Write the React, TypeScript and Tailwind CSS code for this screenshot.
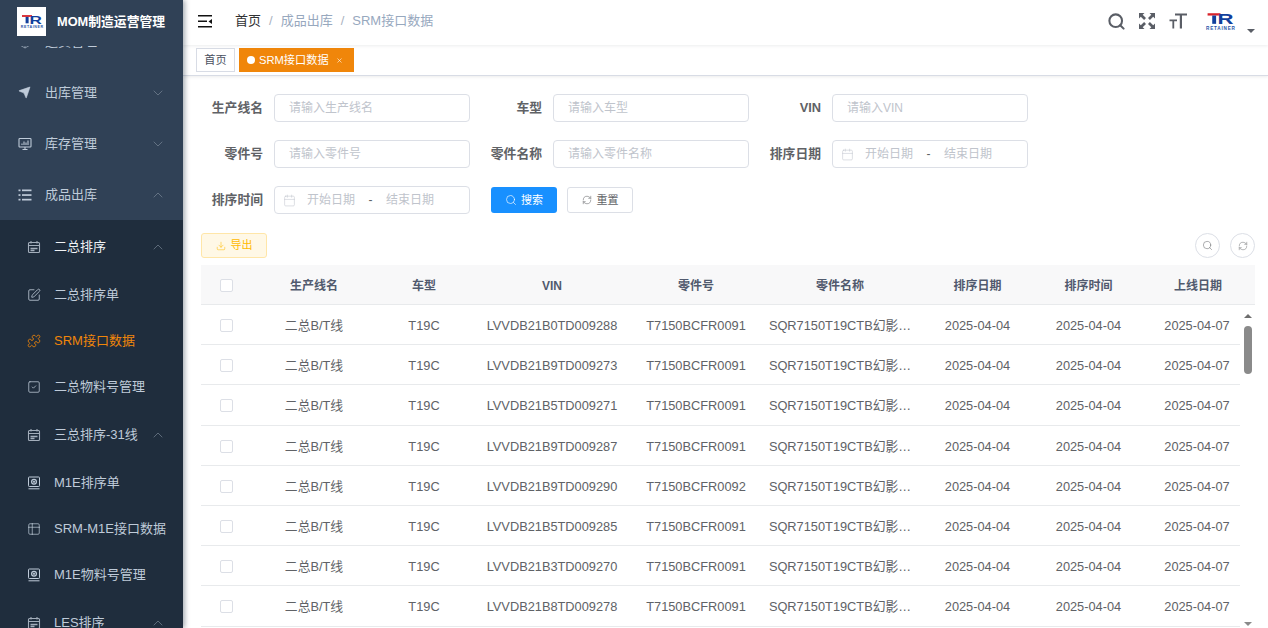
import React from "react";
import { ChevronDown, ChevronUp, Search, RefreshCw, Download, X, Calendar, SquarePen, Puzzle, SquareCheck, Table2, Send, Package } from "lucide-react";

function Logo({ w, h }: { w: number; h: number }) {
  return (
    <svg width={w} height={h} viewBox="0 0 60 36">
      <rect x="5" y="2" width="25" height="4.500" fill="#d8232a" />
      <rect x="14" y="6.500" width="7.500" height="16" fill="#123f9c" />
      <text x="24" y="23" fontFamily="Liberation Sans" fontWeight="700" fontSize="29" textLength="31" lengthAdjust="spacingAndGlyphs" fill="#123f9c">R</text>
      <text x="2" y="34" fontFamily="Liberation Sans" fontWeight="700" fontSize="9" textLength="56" lengthAdjust="spacing" fill="#2b55a8">RETAINER</text>
    </svg>
  );
}

function CalKey() {
  return (
    <svg viewBox="0 0 14 14" width="14" height="14" fill="none" stroke="currentColor" strokeWidth="1.100">
      <rect x="1.500" y="2.500" width="11" height="10" rx="1" />
      <path d="M4 1v2.500M10 1v2.500M1.500 5.500h11" />
      <path d="M3.500 8.500h7M3.500 10.500h4" strokeWidth="1.300" />
    </svg>
  );
}

function MonGear() {
  return (
    <svg viewBox="0 0 14 14" width="14" height="14" fill="none" stroke="currentColor" strokeWidth="1">
      <rect x="1.500" y="1" width="11" height="9.500" rx="0.800" />
      <circle cx="7" cy="5.700" r="2.400" strokeWidth="1.200" />
      <circle cx="7" cy="5.700" r="0.700" fill="currentColor" />
      <path d="M1.500 12.800h11" />
    </svg>
  );
}

function MonChart() {
  return (
    <svg viewBox="0 0 14 14" width="14" height="14" fill="none" stroke="currentColor" strokeWidth="1.100">
      <rect x="1" y="1.500" width="12" height="8.500" rx="0.800" />
      <path d="M4 8V6.500M6 8V4.500M8 8V5.500M10 8V3.500" />
      <path d="M7 10v2M4.500 12.500h5" />
    </svg>
  );
}

function ListIcon() {
  return (
    <svg viewBox="0 0 14 14" width="14" height="14" fill="currentColor">
      <rect x="0.500" y="1.500" width="2" height="1.700" />
      <rect x="0.500" y="6.200" width="2" height="1.700" />
      <rect x="0.500" y="10.800" width="2" height="1.700" />
      <rect x="4" y="1.500" width="9.500" height="1.700" />
      <rect x="4" y="6.200" width="9.500" height="1.700" />
      <rect x="4" y="10.800" width="9.500" height="1.700" />
    </svg>
  );
}

function TopItem({ icon, label, open }: { icon: React.ReactNode; label: string; open?: boolean }) {
  return (
    <div className="h-[51px] shrink-0 flex items-center pl-[18px] pr-[17px] text-[#bfcbd9] text-[13px]">
      <span className="w-[27px] shrink-0 flex items-center">{icon}</span>
      <span className="flex-1">{label}</span>
      {open ? <ChevronUp size={16} strokeWidth={0.9} className="text-[#8793a3]" /> : <ChevronDown size={16} strokeWidth={0.9} className="text-[#8793a3]" />}
    </div>
  );
}

function SubHead({ label, light }: { label: string; light?: boolean }) {
  return (
    <div className={`h-[50px] shrink-0 flex items-center pl-[27px] pr-[17px] text-[13px] ${light ? "text-[#f0f2f5]" : "text-[#bfcbd9]"}`}>
      <span className="w-[27px] shrink-0 flex items-center text-[#a3aebb]"><CalKey /></span>
      <span className="flex-1">{label}</span>
      <ChevronUp size={16} strokeWidth={0.9} className="text-[#8793a3]" />
    </div>
  );
}

function Leaf({ icon, label, active }: { icon: React.ReactNode; label: string; active?: boolean }) {
  return (
    <div className={`h-[46px] shrink-0 flex items-center pl-[27px] text-[13px] ${active ? "text-[#f0860a]" : "text-[#bfcbd9]"}`}>
      <span className="w-[27px] shrink-0 flex items-center">{icon}</span>
      <span className="whitespace-nowrap">{label}</span>
    </div>
  );
}

function Sidebar() {
  return (
    <aside className="w-[183px] shrink-0 h-full bg-[#304156] flex flex-col relative z-20 shadow-[2px_0_5px_rgba(0,21,41,0.35)]">
      <div className="h-[46px] shrink-0 flex items-center pl-[17px] pb-[3px]">
        <div className="w-[29px] h-[29px] bg-white flex items-center justify-center">
          <Logo w={24} h={15} />
        </div>
        <span className="ml-[11px] text-white font-bold text-[12.800px] whitespace-nowrap">MOM制造运营管理</span>
      </div>
      <div className="flex-1 overflow-hidden">
        <div className="-mt-[30px] flex flex-col">
          <TopItem icon={<Package size={14} strokeWidth={1} />} label="运货管理" />
          <TopItem icon={<Send size={13} fill="currentColor" strokeWidth={1} />} label="出库管理" />
          <TopItem icon={<MonChart />} label="库存管理" />
          <TopItem icon={<ListIcon />} label="成品出库" open />
          <div className="bg-[#1f2d3d] flex flex-col pt-[2px]">
            <SubHead label="二总排序" light />
            <Leaf icon={<SquarePen size={14} strokeWidth={1.4} />} label="二总排序单" />
            <Leaf icon={<Puzzle size={14} strokeWidth={1.4} />} label="SRM接口数据" active />
            <Leaf icon={<SquareCheck size={14} strokeWidth={1.3} />} label="二总物料号管理" />
            <SubHead label="三总排序-31线" />
            <Leaf icon={<MonGear />} label="M1E排序单" />
            <Leaf icon={<Table2 size={14} strokeWidth={1.2} />} label="SRM-M1E接口数据" />
            <Leaf icon={<MonGear />} label="M1E物料号管理" />
            <SubHead label="LES排序" />
          </div>
        </div>
      </div>
    </aside>
  );
}

function TopBar() {
  return (
    <header className="h-[45px] shrink-0 flex items-center pb-[3px] bg-white shadow-[0_1px_3px_rgba(0,21,41,0.08)] relative z-10">
      <svg viewBox="0 0 14 13" width="14" height="13" className="ml-[15px]" fill="#111">
        <rect x="0" y="0" width="14" height="1.500" />
        <rect x="0" y="5.500" width="9" height="1.500" />
        <rect x="0" y="11" width="14" height="1.500" />
        <path d="M14 4v5l-3.500-2.500z" />
      </svg>
      <nav className="ml-[23px] flex items-center text-[13px] whitespace-nowrap">
        <span className="text-[#303133]">首页</span>
        <span className="mx-[8px] text-[#a9b2c0]">/</span>
        <span className="text-[#97a8be]">成品出库</span>
        <span className="mx-[8px] text-[#a9b2c0]">/</span>
        <span className="text-[#97a8be]">SRM接口数据</span>
      </nav>
      <div className="ml-auto flex items-center text-[#5a5e66]">
        <Search size={19} strokeWidth={2.6} />
        <svg viewBox="0 0 18 18" width="18" height="18" fill="currentColor" className="ml-[12px]">
          <path d="M1 1h5.500L4.700 2.800 8 6.100 6.100 8 2.800 4.700 1 6.500zM17 1v5.500l-1.800-1.800L11.900 8 10 6.100l3.300-3.300L11.500 1zM1 17v-5.500l1.800 1.800L6.100 10 8 11.900l-3.300 3.300L6.500 17zM17 17h-5.500l1.800-1.800L10 11.900 11.900 10l3.300 3.300 1.800-1.800z" />
        </svg>
        <svg viewBox="0 0 18 18" width="18" height="18" fill="currentColor" className="ml-[13px]">
          <path d="M6 1.500h12v2h-5v13h-2.200v-13H6zM0.500 7.500h7.500v1.700H5.200v7.300H3.400V9.200H0.500z" />
        </svg>
        <div className="ml-[18px] w-[31px] h-[19px] flex items-center">
          <Logo w={31} h={19} />
        </div>
        <div className="ml-[11px] mr-[13px] mt-[19px] w-0 h-0 border-x-[4px] border-x-transparent border-t-[4px] border-t-[#5a5e66]" />
      </div>
    </header>
  );
}

function TagsBar() {
  return (
    <div className="h-[31px] shrink-0 flex items-start pt-[3px] pl-[13px] gap-[4px] bg-white border-b border-[#d8dce5] shadow-[0_1px_3px_rgba(0,0,0,0.08)] relative z-[5] text-[11.200px]">
      <div className="h-[24px] w-[39px] flex items-center justify-center border border-[#d8dce5] text-[#495060]">首页</div>
      <div className="h-[24px] w-[115px] flex items-center bg-[#f0860a] text-white pl-[8px]">
        <span className="w-[8px] h-[8px] rounded-full bg-white mr-[4px]" />
        <span className="whitespace-nowrap">SRM接口数据</span>
        <X size={7} strokeWidth={2} className="ml-[7px]" />
      </div>
    </div>
  );
}

function Field({ label, placeholder }: { label: string; placeholder: string }) {
  return (
    <div className="flex items-center h-[28px]">
      <label className="w-[62px] text-right font-bold text-[12.800px] text-[#606266] whitespace-nowrap">{label}</label>
      <input
        readOnly
        placeholder={placeholder}
        className="ml-[11px] w-[196px] h-[28px] px-[14px] rounded-[4px] border border-[#dcdfe6] bg-white text-[12px] placeholder:text-[#c0c4cc] outline-none"
      />
    </div>
  );
}

function DateField({ label }: { label: string }) {
  return (
    <div className="flex items-center h-[28px]">
      <label className="w-[62px] text-right font-bold text-[12.800px] text-[#606266] whitespace-nowrap">{label}</label>
      <div className="ml-[11px] w-[196px] h-[28px] rounded-[4px] border border-[#dcdfe6] bg-white flex items-center pl-[8px] text-[12px] text-[#c0c4cc]">
        <Calendar size={13} strokeWidth={1} />
        <span className="ml-[11px] w-[48px]">开始日期</span>
        <span className="w-[31px] text-center text-[#606266]">-</span>
        <span className="w-[48px]">结束日期</span>
      </div>
    </div>
  );
}

const COLS = "grid grid-cols-[50px_126px_94px_162px_126px_162px_113px_109px_110px]";

const ROWS = [
  ["LVVDB21B0TD009288", "T7150BCFR0091"],
  ["LVVDB21B9TD009273", "T7150BCFR0091"],
  ["LVVDB21B5TD009271", "T7150BCFR0091"],
  ["LVVDB21B9TD009287", "T7150BCFR0091"],
  ["LVVDB21B9TD009290", "T7150BCFR0092"],
  ["LVVDB21B5TD009285", "T7150BCFR0091"],
  ["LVVDB21B3TD009270", "T7150BCFR0091"],
  ["LVVDB21B8TD009278", "T7150BCFR0091"],
];

function Check() {
  return <span className="w-[13px] h-[13px] rounded-[2px] border border-[#dcdfe6] bg-white block" />;
}

function DataTable() {
  const heads = ["生产线名", "车型", "VIN", "零件号", "零件名称", "排序日期", "排序时间", "上线日期"];
  return (
    <div className="w-[1054px] flex flex-col">
      <div className={`${COLS} h-[40px] shrink-0 pt-[2px] bg-[#f8f8f9] border-b border-[#e8eaec] items-center text-[12px] font-bold text-[#515a6e] text-center`}>
        <span className="flex justify-center"><Check /></span>
        {heads.map((h) => (
          <span key={h}>{h}</span>
        ))}
      </div>
      <div className="flex">
        <div className="w-[1039px] shrink-0 overflow-hidden">
          {ROWS.map(([vin, part]) => (
            <div key={vin} className={`${COLS} w-[1052px] h-[40.200px] pt-[2px] border-b border-[#e8eaec] items-center text-[12.800px] text-[#606266] text-center whitespace-nowrap`}>
              <span className="flex justify-center"><Check /></span>
              <span>二总B/T线</span>
              <span>T19C</span>
              <span>{vin}</span>
              <span>{part}</span>
              <span>SQR7150T19CTB幻影…</span>
              <span>2025-04-04</span>
              <span>2025-04-04</span>
              <span className="pr-[2px]">2025-04-07</span>
            </div>
          ))}
        </div>
        <div className="w-[15px] shrink-0 h-[323px] flex flex-col items-center pl-[1px]">
          <div className="mt-[9px] w-0 h-0 border-x-[4px] border-x-transparent border-b-[4px] border-b-[#6e6e6e]" />
          <div className="mt-[8px] w-[8px] h-[48px] rounded-[4px] bg-[#8a8a8a]" />
          <div className="mt-auto mb-[2px] w-0 h-0 border-x-[4px] border-x-transparent border-t-[4px] border-t-[#8a8a8a]" />
        </div>
      </div>
    </div>
  );
}

export default function App() {
  return (
    <div className="w-[1268px] h-[628px] overflow-hidden flex bg-white font-['Liberation_Sans','Noto_Sans_CJK_SC',sans-serif]">
      <Sidebar />
      <main className="flex-1 min-w-0 h-full flex flex-col">
        <TopBar />
        <TagsBar />
        <div className="flex-1 overflow-hidden pl-[18px] pt-[18px]">
          <div className="grid grid-cols-[269px_269px_269px] gap-x-[10px] gap-y-[18px]">
            <Field label="生产线名" placeholder="请输入生产线名" />
            <Field label="车型" placeholder="请输入车型" />
            <Field label="VIN" placeholder="请输入VIN" />
            <Field label="零件号" placeholder="请输入零件号" />
            <Field label="零件名称" placeholder="请输入零件名称" />
            <DateField label="排序日期" />
            <DateField label="排序时间" />
            <div className="flex items-center gap-[10px] pl-[11px] text-[11px]">
              <button className="w-[66px] h-[26px] rounded-[3px] bg-[#1890ff] text-white flex items-center justify-center gap-[4px]">
                <Search size={12} strokeWidth={1.3} />
                搜索
              </button>
              <button className="w-[66px] h-[26px] rounded-[3px] border border-[#dcdfe6] text-[#606266] flex items-center justify-center gap-[5px]">
                <RefreshCw size={10} strokeWidth={1.3} />
                重置
              </button>
            </div>
          </div>
          <div className="w-[1054px] flex items-center justify-between mt-[19px] h-[25px]">
            <button className="w-[66px] h-[25px] rounded-[3px] border border-[#ffe6a8] bg-[#fff8e6] text-[#ffba00] text-[11px] flex items-center justify-center gap-[5px]">
              <Download size={10} strokeWidth={1.3} />
              导出
            </button>
            <div className="flex gap-[10px]">
              <span className="w-[25px] h-[25px] rounded-full border border-[#dcdfe6] flex items-center justify-center text-[#606266]"><Search size={11} strokeWidth={1.1} /></span>
              <span className="w-[25px] h-[25px] rounded-full border border-[#dcdfe6] flex items-center justify-center text-[#606266]"><RefreshCw size={10} strokeWidth={1.1} /></span>
            </div>
          </div>
          <div className="mt-[7px]">
            <DataTable />
          </div>
        </div>
      </main>
    </div>
  );
}
